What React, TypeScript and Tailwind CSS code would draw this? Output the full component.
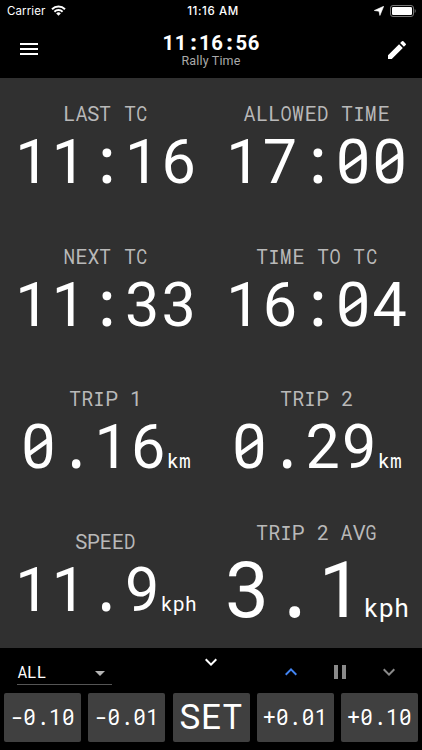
import type { FC } from 'react';

import clsx from 'clsx';
import {
  MdArrowDropDown,
  MdEdit,
  MdExpandLess,
  MdExpandMore,
  MdMenu,
  MdPause,
} from 'react-icons/md';

type MonoProps = {
  text: string;
  className?: string;
};

// per glyph tweaks so that a proportional face fits a 0.6em cell
const GLYPHS: Record<string, string> = {
  A: 'scale-x-[0.88]',
  C: 'scale-x-[0.82]',
  D: 'scale-x-[0.86]',
  G: 'scale-x-[0.8]',
  I: "font-['DejaVu_Sans_Mono'] scale-x-[0.9] scale-y-[0.97]",
  M: 'scale-x-[0.62] font-medium',
  N: 'scale-x-[0.8]',
  O: 'scale-x-[0.8]',
  R: 'scale-x-[0.92]',
  T: 'scale-x-[0.92]',
  W: 'scale-x-[0.64] font-medium',
  X: 'scale-x-[0.9]',
  m: 'scale-x-[0.64] font-medium',
  '-': 'scale-x-[1.6] translate-y-[-0.02em]',
  ':': "font-['Noto_Sans'] translate-x-[0.03em] origin-[50%_88.8%] scale-x-[1.15] scale-y-[1.05]",
  '.': "font-['Noto_Sans'] translate-x-[0.015em] origin-[50%_88.8%] scale-[1.12]",
};

const Mono: FC<MonoProps> = ({ text, className }) => {
  return (
    <span className={clsx('inline-flex items-baseline leading-none', className)}>
      {text.split('').map((char, i) => (
        <span key={i} className="relative flex w-[0.6em] justify-center whitespace-pre">
          <span className={clsx('block shrink-0', GLYPHS[char])}>{char}</span>
          {char === '0' && (
            <svg
              className="absolute inset-0 h-full w-full"
              viewBox="0 0 60 100"
              stroke="currentColor"
              strokeWidth="7"
            >
              <path d="M14 61 46 38" />
            </svg>
          )}
        </span>
      ))}
    </span>
  );
};

type CellProps = {
  label: string;
  value: string;
  unit?: string;
  large?: boolean;
};

const Cell: FC<CellProps> = ({ label, value, unit, large }) => {
  return (
    <div className="flex flex-col items-center justify-center">
      <div className="flex h-6 items-center pt-px text-[20.3px] text-[#b9b9b9]">
        <Mono text={label} />
      </div>
      <div
        className={clsx(
          'flex items-center',
          large ? 'h-[88px] text-[78px]' : 'h-[71px] text-[61px]',
        )}
      >
        <div className="flex items-baseline">
          <Mono text={value} />
          {unit && <Mono text={unit} className={large ? '-ml-px text-[0.33em]' : 'text-[0.333em]'} />}
        </div>
      </div>
    </div>
  );
};

const StatusBar: FC = () => {
  return (
    <div className="grid h-[22px] grid-cols-3 items-center pt-px pr-[6px] pl-[7px] font-['Inter'] text-[11.5px]">
      <div className="flex items-center gap-[6px]">
        <span className="tracking-[0.1px]">Carrier</span>
        <svg
          className="-mt-[2px]"
          width="15"
          height="11"
          viewBox="0 0 15 11"
          fill="none"
          stroke="currentColor"
        >
          <path d="M1 4.2a9.3 9.3 0 0 1 13 0" strokeWidth="2" />
          <path d="M3.4 6.7a5.9 5.9 0 0 1 8.2 0" strokeWidth="1.9" />
          <path d="M5.2 8.4a3.3 3.3 0 0 1 4.6 0L7.5 10.8z" fill="currentColor" stroke="none" />
        </svg>
      </div>
      <span className="pl-[3px] text-center font-medium tracking-[0.6px] whitespace-nowrap">
        11:16 AM
      </span>
      <div className="-mt-px flex items-center justify-end gap-[6px]">
        <svg width="10" height="10" viewBox="0 0 10 10" fill="currentColor">
          <path
            d="M9.7.3 5.9 9.5 5 5.2.3 4.5z"
            stroke="currentColor"
            strokeWidth=".6"
            strokeLinejoin="round"
          />
        </svg>
        <svg width="26" height="12" viewBox="0 0 26 12">
          <rect x=".5" y=".5" width="23" height="11" rx="2.5" fill="none" stroke="#777" />
          <rect x="2" y="2" width="20" height="8" rx="1.2" fill="#fff" />
          <path d="M24.7 4v4c1.3-.6 1.3-3.4 0-4z" fill="#777" />
        </svg>
      </div>
    </div>
  );
};

const Header: FC = () => {
  return (
    <header className="h-[78px] bg-black">
      <StatusBar />
      <div className="flex h-14 items-center justify-between pr-[13px] pl-[17px]">
        <MdMenu size={24} className="-mt-[2px]" />
        <div className="flex flex-col items-center pr-1">
          <Mono text="11:16:56" className="text-[20.3px] font-bold" />
          <span className="mt-px text-[12.5px] leading-[14px] tracking-[0.15px] text-[#aaa]">
            Rally Time
          </span>
        </div>
        <MdEdit size={24} className="-mt-px" />
      </div>
    </header>
  );
};

const Footer: FC = () => {
  return (
    <footer className="h-[102px] bg-black">
      <div className="grid h-[44.5px] grid-cols-[160px_102px_1fr]">
        <div className="pt-[13px] pl-[17px]">
          <div className="flex h-6 w-[95px] items-center justify-between border-b border-[#555]">
            <Mono text="ALL" className="pt-[2px] text-[16.3px]" />
            <MdArrowDropDown size={24} className="text-[#b5b5b5]" />
          </div>
        </div>
        <div className="flex justify-center pt-[2px]">
          <MdExpandMore size={24} />
        </div>
        <div className="flex justify-between pt-3 pr-[21px] pl-[17px] text-[#8a8a8a]">
          <MdExpandLess size={24} className="text-[#4285f4]" />
          <MdPause size={24} />
          <MdExpandMore size={24} />
        </div>
      </div>
      <div className="flex justify-between px-1">
        {['-0.10', '-0.01', 'SET', '+0.01', '+0.10'].map((step) => (
          <button
            key={step}
            className={clsx(
              'flex h-[49px] w-[77px] items-center justify-center rounded-[2px] bg-[#404040]',
              step === 'SET' ? 'text-[35px]' : 'text-[21.5px]',
            )}
          >
            <Mono text={step} />
          </button>
        ))}
      </div>
    </footer>
  );
};

const App: FC = () => {
  return (
    <div className="flex h-[750px] w-[422px] flex-col bg-[#303030] font-['Roboto',sans-serif] text-white">
      <Header />
      <main className="grid flex-1 grid-cols-2 grid-rows-4">
        <Cell label="LAST TC" value="11:16" />
        <Cell label="ALLOWED TIME" value="17:00" />
        <Cell label="NEXT TC" value="11:33" />
        <Cell label="TIME TO TC" value="16:04" />
        <Cell label="TRIP 1" value="0.16" unit="km" />
        <Cell label="TRIP 2" value="0.29" unit="km" />
        <Cell label="SPEED" value="11.9" unit="kph" />
        <Cell label="TRIP 2 AVG" value="3.1" unit="kph" large />
      </main>
      <Footer />
    </div>
  );
};

export default App;
